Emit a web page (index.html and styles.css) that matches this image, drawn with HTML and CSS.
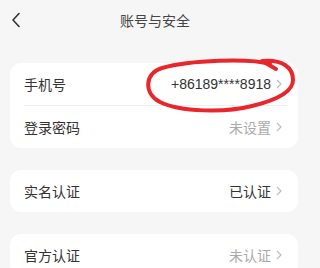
FILE: index.html
```html
<!DOCTYPE html>
<html lang="zh-CN">
<head>
<meta charset="utf-8">
<link rel="stylesheet" href="styles.css">
</head>
<body>
<div class="page">
  <header class="topbar">
    <div class="back">
      <svg width="10" height="16" viewBox="0 0 10 16"><path d="M8 1.5 L2 8 L8 14.5" fill="none" stroke="#333" stroke-width="1.6" stroke-linecap="round" stroke-linejoin="round"/></svg>
    </div>
    <div class="title">账号与安全</div>
    <div></div>
  </header>
  <main class="list">
    <section class="card">
      <div class="row">
        <span class="label">手机号</span>
        <span class="value dark">+86189****8918<svg class="chev" width="6" height="10" viewBox="0 0 6 10"><path d="M1 1 L5 5 L1 9" fill="none" stroke="#bbb" stroke-width="1.1"/></svg></span>
      </div>
      <div class="sep"></div>
      <div class="row">
        <span class="label">登录密码</span>
        <span class="value">未设置<svg class="chev" width="6" height="10" viewBox="0 0 6 10"><path d="M1 1 L5 5 L1 9" fill="none" stroke="#bbb" stroke-width="1.1"/></svg></span>
      </div>
    </section>
    <section class="card">
      <div class="row">
        <span class="label">实名认证</span>
        <span class="value dark">已认证<svg class="chev" width="6" height="10" viewBox="0 0 6 10"><path d="M1 1 L5 5 L1 9" fill="none" stroke="#bbb" stroke-width="1.1"/></svg></span>
      </div>
    </section>
    <section class="card">
      <div class="row">
        <span class="label">官方认证</span>
        <span class="value">未认证<svg class="chev" width="6" height="10" viewBox="0 0 6 10"><path d="M1 1 L5 5 L1 9" fill="none" stroke="#bbb" stroke-width="1.1"/></svg></span>
      </div>
    </section>
  </main>
  <svg class="mark" width="300" height="268" viewBox="0 0 300 268">
    <path d="M270 64 C250 58, 190 60, 162 68 C145 73, 143 93, 160 102 C180 112, 225 113, 252 106 C277 100, 293 92, 293 80 C293 68, 283 59, 262 61 L276 69" fill="none" stroke="#e8262b" stroke-width="4" stroke-linecap="round" stroke-linejoin="round"/>
  </svg>
</div>
</body>
</html>
```
FILE: styles.css
```css
html, body {
  margin: 0;
  padding: 0;
  background: #f6f6f6;
}
body {
  font-family: "Liberation Sans", "Noto Sans CJK SC", sans-serif;
  width: 300px;
  height: 268px;
  overflow: hidden;
}
.page {
  position: relative;
  width: 300px;
  height: 268px;
}
.topbar {
  height: 40px;
  display: grid;
  grid-template-columns: 40px 1fr 30px;
  align-items: center;
}
.back {
  padding-left: 11px;
  display: flex;
  align-items: center;
}
.title {
  text-align: center;
  font-size: 14px;
  color: #444;
}
.list {
  padding: 23px 2px 0 10px;
  display: flex;
  flex-direction: column;
  gap: 22px;
}
.card {
  background: #fff;
  border-radius: 11px;
}
.row {
  height: 42px;
  display: flex;
  align-items: center;
  justify-content: space-between;
  padding: 0 16px 0 14px;
}
.label {
  font-size: 14px;
  color: #333;
}
.value {
  font-size: 14px;
  color: #aaa;
  display: flex;
  align-items: center;
}
.value.dark {
  color: #333;
}
.chev {
  margin-left: 5px;
}
.sep {
  height: 1px;
  background: #ededed;
  margin: 0 11px 0 14px;
}
.mark {
  position: absolute;
  left: 0;
  top: 0;
  pointer-events: none;
}
```
